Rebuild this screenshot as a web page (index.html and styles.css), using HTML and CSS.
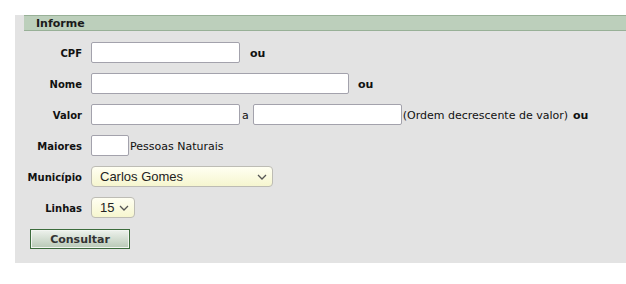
FILE: index.html
```html
<!DOCTYPE html>
<html lang="pt">
<head>
  <meta charset="UTF-8">
  <title>Informe</title>
  <link rel="stylesheet" href="styles.css">
</head>
<body>

<div class="painel">
  <div class="titulo">Informe</div>

  <form class="campos" onsubmit="return false">
    <label class="rotulo">CPF</label>
    <div class="linha">
      <input type="text" class="txt medio">
      <span class="ou">ou</span>
    </div>

    <label class="rotulo">Nome</label>
    <div class="linha">
      <input type="text" class="txt longo">
      <span class="ou ou-nome">ou</span>
    </div>

    <label class="rotulo">Valor</label>
    <div class="linha">
      <input type="text" class="txt medio">
      <span class="sep">a</span>
      <input type="text" class="txt medio">
      <span class="obs">(Ordem decrescente de valor)</span>
      <span class="ou ou-valor">ou</span>
    </div>

    <label class="rotulo">Maiores</label>
    <div class="linha">
      <input type="text" class="txt curto">
      <span class="obs">Pessoas Naturais</span>
    </div>

    <label class="rotulo">Município</label>
    <div class="linha">
      <span class="caixa">
        <select class="sel municipio">
          <option>Carlos Gomes</option>
        </select>
        <svg class="seta" width="10" height="6" viewBox="0 0 10 6"><path d="M1 1l4 4 4-4" fill="none" stroke="#555" stroke-width="1.3"/></svg>
      </span>
    </div>

    <label class="rotulo">Linhas</label>
    <div class="linha">
      <span class="caixa">
        <select class="sel linhas">
          <option>15</option>
          <option>30</option>
          <option>50</option>
        </select>
        <svg class="seta" width="10" height="6" viewBox="0 0 10 6"><path d="M1 1l4 4 4-4" fill="none" stroke="#555" stroke-width="1.3"/></svg>
      </span>
    </div>
  </form>

  <button class="btn">Consultar</button>
</div>

</body>
</html>
```

FILE: styles.css
```css
body {
  margin: 0;
  background: #fff;
  font-family: 'DejaVu Sans', Verdana, sans-serif;
  font-size: 11px;
  color: #111;
}

.painel {
  margin: 24px 0 0 15px;
  background: #e3e3e3;
  padding-bottom: 14px;
}

.titulo {
  margin: -9px 0 0 9px;
  height: 14px;
  line-height: 15px;
  padding-left: 12px;
  background: #bccfbb;
  border-top: 1px solid #98b097;
  border-bottom: 1px solid #98b097;
  font-weight: bold;
  font-size: 11px;
  color: #1a1a1a;
}

.campos {
  display: grid;
  grid-template-columns: 67px auto;
  column-gap: 9px;
  row-gap: 10px;
  padding-top: 11px;
  margin: 0;
}

.rotulo {
  display: flex;
  align-items: center;
  justify-content: flex-end;
  font-weight: bold;
  font-size: 10px;
  padding-top: 1px;
}

.linha {
  display: flex;
  align-items: center;
  height: 21px;
}

.txt {
  box-sizing: border-box;
  height: 21px;
  margin: 0;
  padding: 1px 3px;
  border: 1px solid #a3a2ac;
  border-radius: 2px;
  background: #fff;
  font: 11px 'DejaVu Sans', sans-serif;
}

.medio { width: 149px; }
.longo { width: 258px; }
.curto { width: 38px; }

.ou {
  font-weight: bold;
  margin-left: 10px;
  margin-top: 2px;
}

.ou-nome { margin-left: 9px; }
.ou-valor { margin-left: 5px; }

.sep {
  margin: 2px 4px 0 2px;
}

.obs {
  margin-left: 1px;
  margin-top: 2px;
}

.caixa {
  position: relative;
  display: inline-block;
  height: 21px;
}

.sel {
  appearance: none;
  -webkit-appearance: none;
  box-sizing: border-box;
  height: 21px;
  margin: 0;
  padding: 0 0 0 8px;
  border: 1px solid #bdbcb4;
  border-radius: 4px;
  background: linear-gradient(#fffff2, #f6f6cf);
  font: 13px 'Liberation Sans', Arial, sans-serif;
  color: #222;
}

.seta {
  position: absolute;
  right: 6px;
  top: 8px;
  pointer-events: none;
}

.municipio { width: 182px; }
.linhas { width: 44px; }

.btn {
  display: block;
  box-sizing: border-box;
  margin: 11px 0 0 15px;
  width: 100px;
  height: 20px;
  padding: 0;
  border: 1px solid #3c6b3c;
  box-shadow: inset 0 0 0 1px #f2f5f1;
  background: linear-gradient(#eef2ed, #b8c9b6);
  font: bold 11px 'DejaVu Sans', sans-serif;
  color: #333;
  cursor: pointer;
}
```
